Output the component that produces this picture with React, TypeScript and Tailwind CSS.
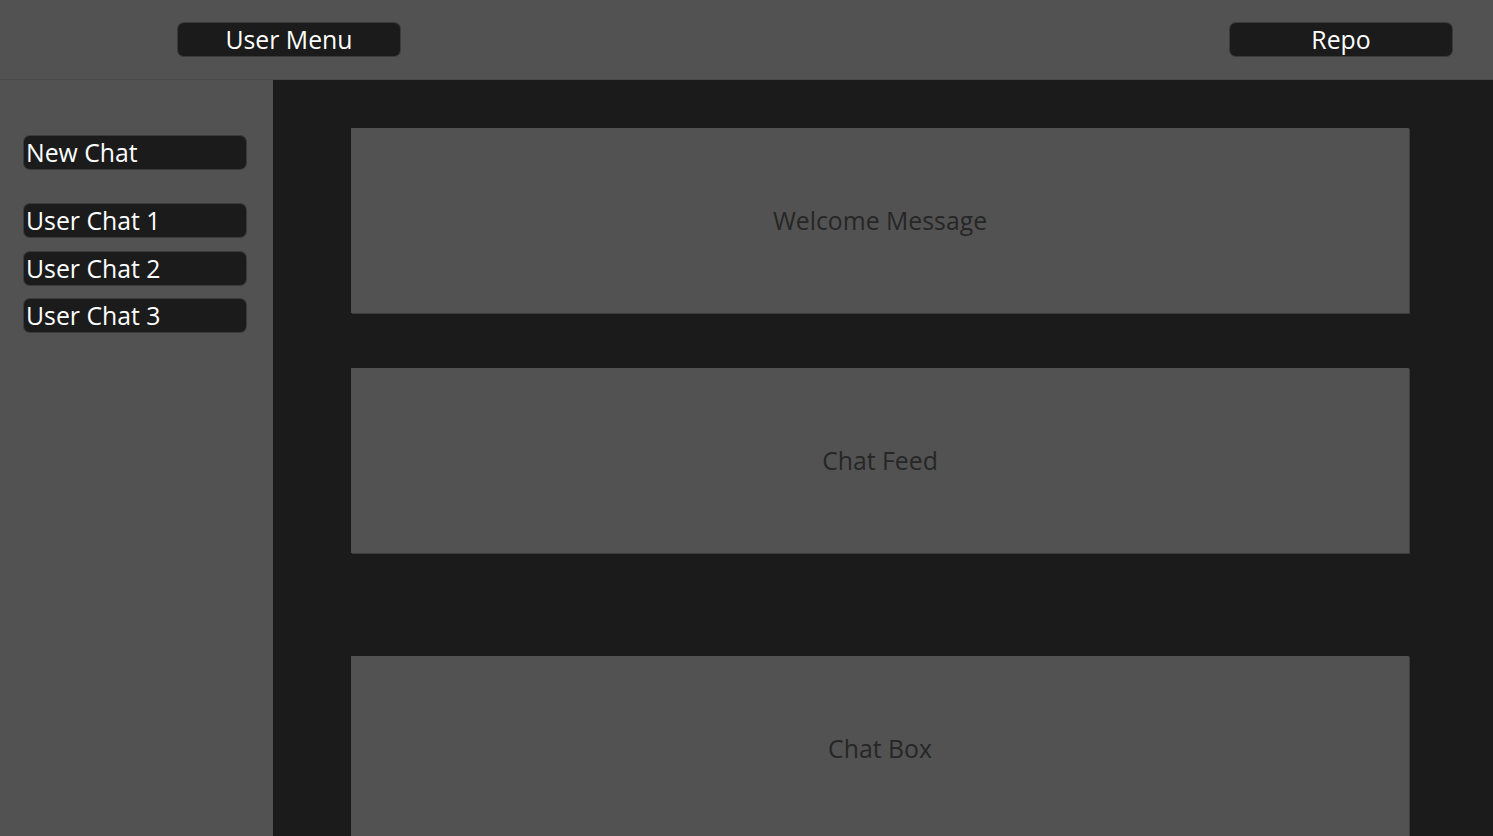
const sideChats = ["User Chat 1", "User Chat 2", "User Chat 3"];

const Panel = ({ label, className = "" }: { label: string; className?: string }) => (
  <div
    className={`h-[185px] w-[1058px] shrink-0 bg-[#525252] shadow-[1px_1px_0_#3d3d3d] flex items-center justify-center text-[24.8px] text-[#262626] ${className}`}
  >
    {label}
  </div>
);

const App = () => {
  return (
    <div
      className="h-screen w-full overflow-hidden bg-[#525252] text-white"
      style={{ fontFamily: '"Open Sans", sans-serif' }}
    >
      {/* top bar */}
      <div className="h-20 flex items-center justify-between pl-[178px] pr-[41px] border-b border-[#4a4a4a]">
        <button className="w-[222px] h-[33px] rounded-md bg-[#1b1b1b] shadow-[0_0_0_1px_#3a3a3a] text-[24.8px] leading-[33px] text-white">
          User Menu
        </button>
        <button className="w-[222px] h-[33px] rounded-md bg-[#1b1b1b] shadow-[0_0_0_1px_#3a3a3a] text-[24.8px] leading-[33px] text-white">
          Repo
        </button>
      </div>

      <div className="flex h-[calc(100vh-80px)]">
        {/* sidebar */}
        <div className="w-[273px] shrink-0 pt-[56px] pl-6 flex flex-col">
          <button className="w-[222px] h-[33px] rounded-md bg-[#1b1b1b] shadow-[0_0_0_1px_#3a3a3a] text-left pl-[2px] text-[24.8px] leading-[33px]">
            New Chat
          </button>
          <div className="mt-[35px] flex flex-col gap-[14.5px]">
            {sideChats.map((chat) => (
              <button
                key={chat}
                className="w-[222px] h-[33px] rounded-md bg-[#1b1b1b] shadow-[0_0_0_1px_#3a3a3a] text-left pl-[2px] text-[24.8px] leading-[33px]"
              >
                {chat}
              </button>
            ))}
          </div>
        </div>

        {/* main */}
        <div className="flex-1 bg-[#1b1b1b] pl-[78px] pt-[48px] flex flex-col">
          <Panel label="Welcome Message" />
          <Panel label="Chat Feed" className="mt-[55px]" />
          <Panel label="Chat Box" className="mt-[103px]" />
        </div>
      </div>
    </div>
  );
};

export default App;
